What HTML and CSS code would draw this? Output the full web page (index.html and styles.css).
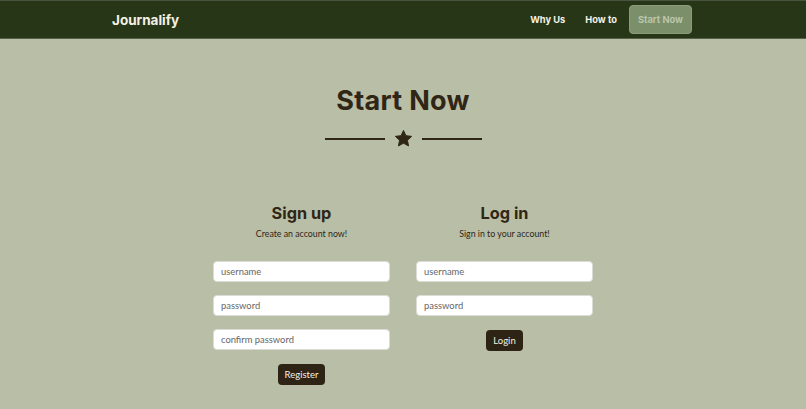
FILE: index.html
```html
<!DOCTYPE html>
<html lang="en">
<head>
<meta charset="utf-8">
<title>Journalify - Start Now</title>
<link rel="stylesheet" href="styles.css">
</head>
<body>
<header class="navbar">
  <div class="nav-inner">
    <a class="brand" href="#">Journalify</a>
    <nav class="nav-links">
      <a class="nav-link" href="#">Why Us</a>
      <a class="nav-link" href="#">How to</a>
      <a class="nav-link active" href="#">Start Now</a>
    </nav>
  </div>
</header>
<main class="page">
  <h1 class="title">Start Now</h1>
  <div class="divider">
    <span class="divider-line"></span>
    <svg class="divider-star" viewBox="0 0 24 24" width="19" height="19" aria-hidden="true">
      <path d="M12 1.8l3.1 6.6 7.2.9-5.3 5 1.4 7.1L12 17.9l-6.4 3.5 1.4-7.1-5.3-5 7.2-.9z" fill="#2f2616" stroke="#2f2616" stroke-width="1.2" stroke-linejoin="round"/>
    </svg>
    <span class="divider-line"></span>
  </div>
  <section class="forms">
    <form class="form-card">
      <h2 class="form-title">Sign up</h2>
      <p class="form-sub">Create an account now!</p>
      <input class="field" type="text" placeholder="username">
      <input class="field" type="password" placeholder="password">
      <input class="field" type="password" placeholder="confirm password">
      <button class="btn" type="button">Register</button>
    </form>
    <form class="form-card">
      <h2 class="form-title">Log in</h2>
      <p class="form-sub">Sign in to your account!</p>
      <input class="field" type="text" placeholder="username">
      <input class="field" type="password" placeholder="password">
      <button class="btn" type="button">Login</button>
    </form>
  </section>
</main>
</body>
</html>
```
FILE: styles.css
```css
* { box-sizing: border-box; }

html, body {
  margin: 0;
  padding: 0;
}

body {
  background: #b9bea6;
  font-family: "Lato", "Open Sans", sans-serif;
  color: #2f2616;
  min-height: 409px;
}

.navbar {
  background: #283618;
  border-top: 1px solid #4a5240;
  border-bottom: 1px solid #56604a;
  height: 39px;
}

.nav-inner {
  height: 100%;
  display: flex;
  align-items: center;
  justify-content: space-between;
  padding: 0 114px 0 112px;
}

.brand {
  font-family: "Inter", "DejaVu Sans", sans-serif;
  font-weight: 700;
  font-size: 13.5px;
  color: #f4f1e4;
  text-decoration: none;
}

.nav-links {
  display: flex;
  align-items: center;
}

.nav-link {
  font-family: "Inter", "DejaVu Sans", sans-serif;
  font-weight: 700;
  font-size: 9.3px;
  color: #f4f1e4;
  text-decoration: none;
  padding: 9px 10px;
  border-radius: 4px;
}

.nav-link.active {
  background: #7b8f6b;
  color: #b9c6ab;
  border: 1px solid #8a9c7b;
  padding: 9px 8px;
  height: 29px;
  display: flex;
  align-items: center;
  margin-left: 2px;
}

.page {
  display: flex;
  flex-direction: column;
  align-items: center;
  padding-top: 46px;
}

.title {
  margin: 0;
  font-family: "Inter", "DejaVu Sans", sans-serif;
  font-weight: 700;
  font-size: 27px;
  line-height: 32px;
  color: #2f2616;
  letter-spacing: 0.3px;
}

.divider {
  display: flex;
  align-items: center;
  gap: 8px;
  margin-top: 12px;
}

.divider-line {
  display: block;
  width: 60px;
  height: 2px;
  background: #2f2616;
}

.divider-star {
  display: block;
  margin: 0 1px;
}

.forms {
  display: flex;
  gap: 26px;
  margin-top: 55px;
}

.form-card {
  width: 177px;
  display: flex;
  flex-direction: column;
  align-items: center;
  margin: 0;
}

.form-title {
  margin: 0;
  font-family: "Inter", "DejaVu Sans", sans-serif;
  font-weight: 700;
  font-size: 16.3px;
  line-height: 20px;
  color: #2f2616;
}

.form-sub {
  margin: 5px 0 21px;
  font-size: 8.8px;
  line-height: 12px;
  color: #2f2616;
}

.field {
  width: 177px;
  height: 21px;
  margin: 0 0 13px;
  padding: 0 7px;
  background: #fff;
  border: 1.5px solid #dcdcd6;
  border-radius: 4px;
  font-family: "Lato", sans-serif;
  font-size: 9.4px;
  color: #333;
  outline: none;
}

.field::placeholder {
  color: #666;
}

.btn {
  margin-top: 1px;
  background: #2e2415;
  color: #f4f1e4;
  border: none;
  border-radius: 4px;
  font-family: "Lato", sans-serif;
  font-size: 9.5px;
  height: 21px;
  padding: 0 7px;
  cursor: pointer;
}
```
